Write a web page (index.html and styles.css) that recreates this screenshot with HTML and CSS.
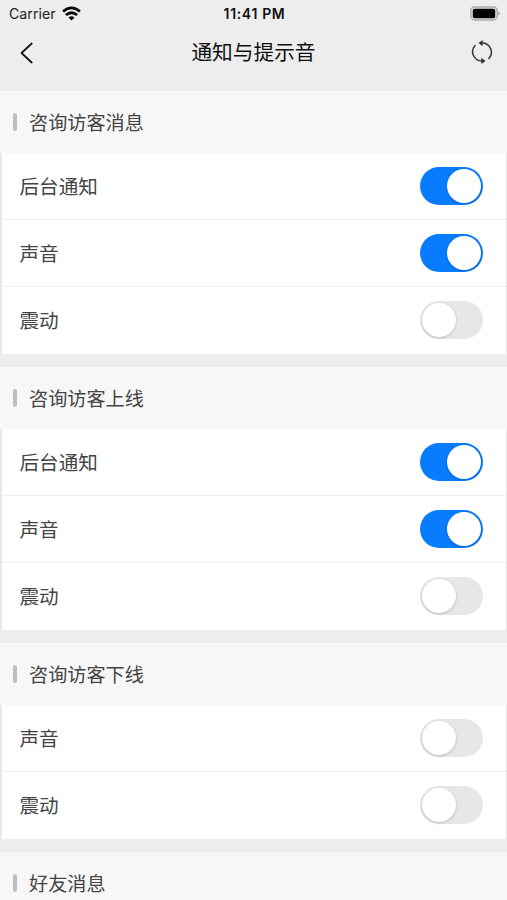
FILE: index.html
```html
<!DOCTYPE html>
<html lang="zh-CN">
<head>
<meta charset="utf-8">
<title>通知与提示音</title>
<link rel="stylesheet" href="styles.css">
</head>
<body>
<header class="top">
  <div class="status">
    <div class="carrier"><span>Carrier</span>
      <svg width="19" height="15" viewBox="0 0 19 15"><g fill="none" stroke="#080808" stroke-width="2.8"><path d="M1.1 5.5Q9.5-1.8 17.9 5.5"/><path d="M3.9 9Q9.5 4.4 15.1 9"/></g><path d="M6.5 11.5Q9.5 9 12.5 11.5L9.5 14.6Z" fill="#080808"/></svg>
    </div>
    <time class="clock">11:41 PM</time>
    <svg class="battery" width="31" height="15" viewBox="0 0 31 15"><rect x=".8" y=".9" width="26.4" height="13" rx="3.8" fill="#e4e4e4" stroke="#aaa" stroke-width="1.5"/><rect x="2.8" y="2.8" width="22.4" height="9.4" rx="2" fill="#000"/><path d="M28.2 5.2L30.5 7.4L28.2 9.6Z" fill="#aaa"/></svg>
  </div>
  <nav class="nav">
    <svg class="back" width="14" height="22" viewBox="0 0 14 22"><path d="M11.7 1.5L1.5 11L11.7 20.5" fill="none" stroke="#161616" stroke-width="1.8" stroke-linecap="round" stroke-linejoin="round"/></svg>
    <h1>通知与提示音</h1>
    <svg width="22" height="24" viewBox="0 0 22 24"><g fill="none" stroke="#333" stroke-width="1.5" stroke-linecap="round"><path d="M4.1 5.5A9.2 9.2 0 0 0 11.6 20.9"/><path d="M10.4 3.1A9.2 9.2 0 0 1 17.9 18.5"/></g><path d="M7.8 3.1L11.4.5V5.7Z M14.2 20.9L10.6 18.3V23.5Z" fill="#333" stroke="#333" stroke-width=".5" stroke-linejoin="round"/></svg>
  </nav>
</header>
<main>
  <section>
    <h2>咨询访客消息</h2>
    <div class="card">
      <div class="row"><span>后台通知</span><i class="switch on"></i></div>
      <div class="row"><span>声音</span><i class="switch on"></i></div>
      <div class="row"><span>震动</span><i class="switch"></i></div>
    </div>
  </section>
  <section>
    <h2>咨询访客上线</h2>
    <div class="card">
      <div class="row"><span>后台通知</span><i class="switch on"></i></div>
      <div class="row"><span>声音</span><i class="switch on"></i></div>
      <div class="row"><span>震动</span><i class="switch"></i></div>
    </div>
  </section>
  <section>
    <h2>咨询访客下线</h2>
    <div class="card">
      <div class="row"><span>声音</span><i class="switch"></i></div>
      <div class="row"><span>震动</span><i class="switch"></i></div>
    </div>
  </section>
  <section>
    <h2>好友消息</h2>
  </section>
</main>
</body>
</html>
```
FILE: styles.css
```css
* { box-sizing: border-box; }
body {
  margin: 0;
  height: 900px;
  overflow: hidden;
  background: #ededed;
  color: #444;
  font-family: Inter, "Noto Sans CJK SC", sans-serif;
}
svg { display: block; }
.top { height: 91.4px; }
.status {
  height: 27px;
  padding: 0 6px 0 9px;
  display: grid;
  grid-template-columns: 1fr auto 1fr;
  align-items: center;
  color: #222;
}
.carrier { display: flex; align-items: center; gap: 6px; font-size: 14.2px; }
.carrier svg { margin-top: -1px; }
.clock { font-size: 14px; font-weight: 600; letter-spacing: .65px; margin-right: 1px; color: #111; }
.battery { justify-self: end; }
.nav {
  height: 50px;
  padding: 0 14px 0 20px;
  display: flex;
  align-items: center;
  justify-content: space-between;
}
.back { margin-top: 2px; }
h1 { margin: 2px 0 0 2px; font-size: 20.7px; line-height: 30px; font-weight: 400; color: #111; }
h2 {
  height: 61.5px;
  margin: 0;
  padding-left: 13px;
  display: flex;
  align-items: center;
  gap: 12px;
  background: #f7f7f7;
  font-size: 19.15px;
  font-weight: 400;
}
h2::before { content: ""; width: 4px; height: 18px; border-radius: 2px; background: #bebebe; }
section { margin-bottom: 13px; }
.card { border: solid #e9e9e9; border-width: 0 1px 0 2px; background: #fff; }
.row {
  height: 67.17px;
  padding: 0 23px 0 17.5px;
  display: flex;
  align-items: center;
  justify-content: space-between;
  font-size: 19.6px;
  border-bottom: 1px solid #eee;
}
.row:last-child { border-bottom-color: transparent; }
.row span { margin-top: -1px; }
.switch {
  width: 63px;
  height: 38px;
  padding: 2px;
  display: flex;
  border-radius: 19px;
  background: #e7e7ea;
}
.switch::before {
  content: "";
  width: 34px;
  height: 34px;
  border-radius: 50%;
  background: #fff;
  box-shadow: 0 1px 3px rgba(0, 0, 0, .2);
}
.switch.on { justify-content: flex-end; background: #087cff; }
```
